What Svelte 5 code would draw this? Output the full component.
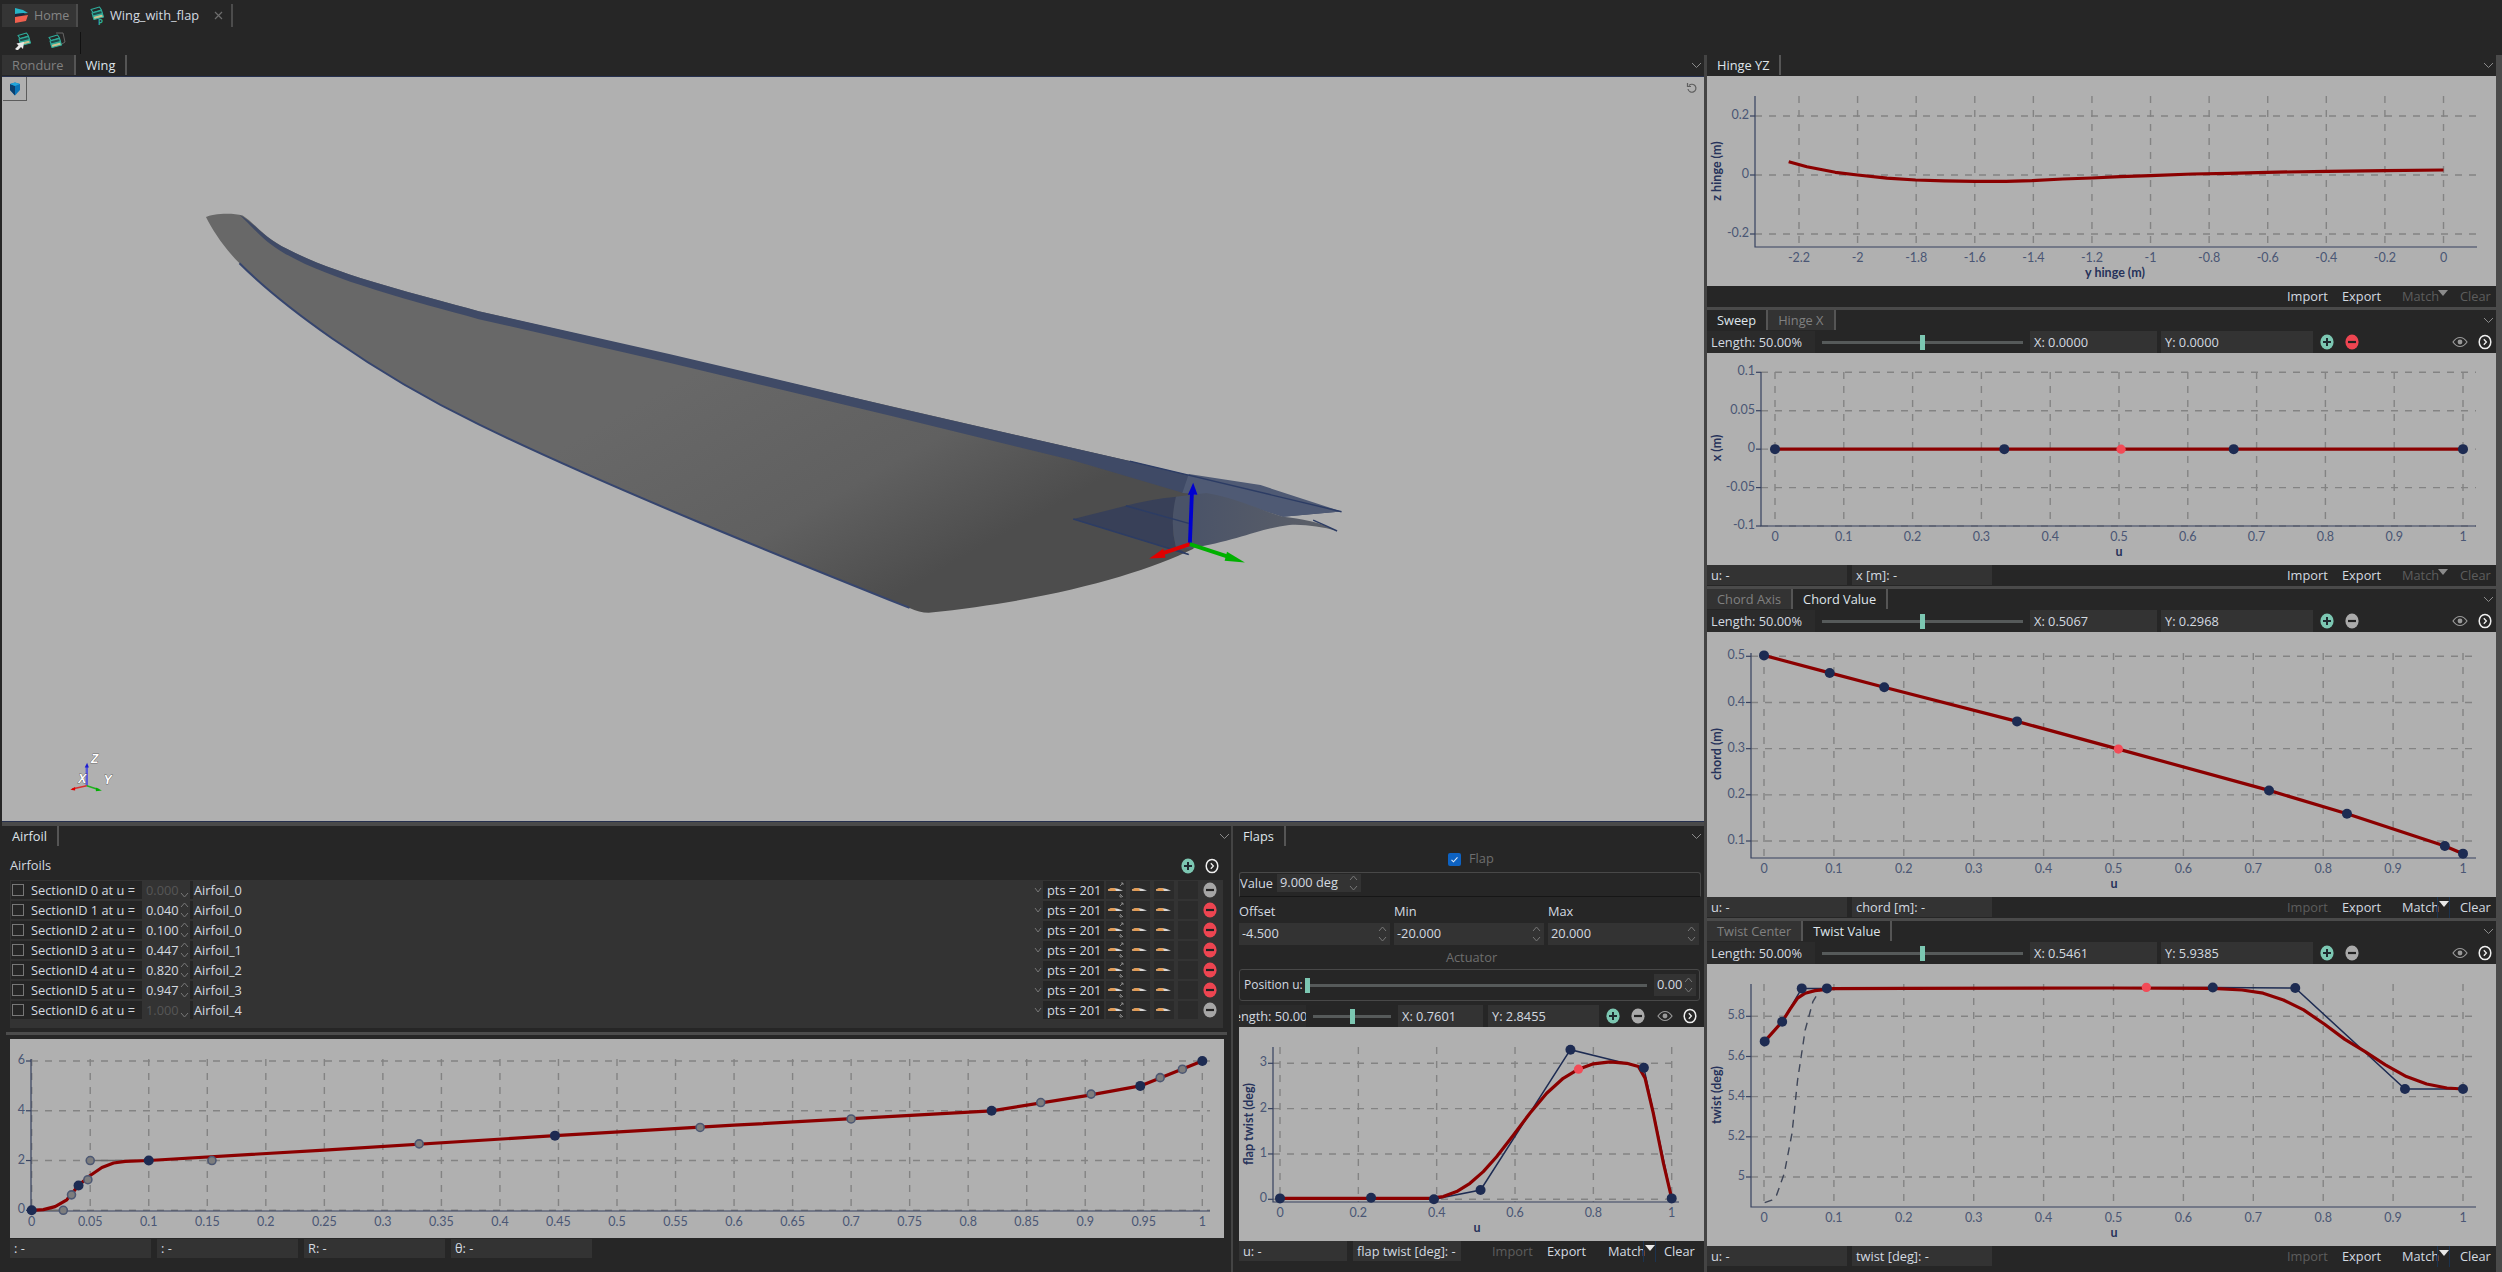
<script>
  // linear map from data value to pixel inside a plot
  const lin = (v0, p0, v1, p1) => (v) => p0 + ((v - v0) * (p1 - p0)) / (v1 - v0);
  const range = (a, b, step) => {
    const out = [];
    const n = Math.round((b - a) / step);
    for (let i = 0; i <= n; i++) out.push(+(a + i * step).toFixed(3));
    return out;
  };
  const line = (p, pts) => pts.map(([u, v]) => `${p.sx(u).toFixed(1)},${p.sy(v).toFixed(1)}`).join(' ');

  const hingePlot = {
    w: 789, h: 210, l: 48, t: 20, b: 171, r: 770,
    sx: lin(-2.2, 92, 0, 736.5), sy: lin(0.2, 40, -0.2, 158),
    xt: range(-2.2, 0, 0.2), yt: [0.2, 0, -0.2], tickY: 183, labelY: 198,
    xlabel: 'y hinge (m)', xlabelX: 408, ylabel: 'z hinge (m)', ylabelY: 95,
    curve: [[-2.235,.045],[-2.173,.028],[-2.076,.009],[-2,0],[-1.9,-.011],[-1.802,-.017],[-1.705,-.02],[-1.6,-.0215],[-1.493,-.0215],[-1.405,-.019],[-1.3,-.0136],[-1.2,-.01],[-1.104,-.0057],[-1,-.002],[-.857,.0034],[-.733,.0057],[-.6,.009],[-.397,.0125],[-.2,.0147],[0,.017]]
  };

  const sweepPlot = {
    w: 789, h: 212, l: 54, t: 19, b: 173, r: 769,
    sx: lin(0, 68, 1, 756), sy: lin(0.1, 19.3, -0.1, 173),
    xt: range(0, 1, 0.1), yt: [0.1, 0.05, 0, -0.05, -0.1], tickY: 185, labelY: 200,
    xlabel: 'u', xlabelX: 412, ylabel: 'x (m)', ylabelY: 95,
    curve: [[0,0],[1,0]], ctrl: [[0,0],[1,0]],
    dots: [[0,0],[.3333,0],[.6667,0],[1,0]], pick: [.503,0]
  };

  const chordPlot = {
    w: 789, h: 265, l: 44, t: 21, b: 226, r: 769,
    sx: lin(0, 57, 1, 756), sy: lin(0.5, 24.3, 0.1, 209),
    xt: range(0, 1, 0.1), yt: [0.5, 0.4, 0.3, 0.2, 0.1], tickY: 238, labelY: 253,
    xlabel: 'u', xlabelX: 407, ylabel: 'chord (m)', ylabelY: 122,
    curve: [[0,.502],[.094,.464],[.172,.433],[.362,.359],[.507,.299],[.7225,.2095],[.834,.159],[.974,.089],[1,.0726]],
    dots: [[0,.502],[.094,.464],[.172,.433],[.362,.359],[.7225,.2095],[.834,.159],[.974,.089],[1,.0726]],
    pick: [.507,.299]
  };

  const twistPlot = {
    w: 789, h: 282, l: 44, t: 20, b: 243, r: 769,
    sx: lin(0, 57, 1, 756), sy: lin(5.8, 52.3, 5, 213),
    xt: range(0, 1, 0.1), yt: [5.8, 5.6, 5.4, 5.2, 5], tickY: 255, labelY: 270,
    xlabel: 'u', xlabelX: 407, ylabel: 'twist (deg)', ylabelY: 131,
    curve: [[.001,5.675],[.026,5.773],[.037,5.835],[.048,5.89],[.059,5.915],[.073,5.928],[.099,5.938],[.201,5.939],[.494,5.941],[.642,5.939],[.684,5.931],[.714,5.915],[.743,5.881],[.772,5.832],[.802,5.76],[.831,5.685],[.86,5.624],[.889,5.558],[.919,5.5],[.948,5.463],[.977,5.443],[1,5.438]],
    ctrl: [[.001,5.675],[.026,5.773],[.054,5.939],[.09,5.939],[.642,5.943],[.76,5.941],[.917,5.438],[1,5.438]],
    dashed: [[.001,4.872],[.011,4.885],[.018,4.91],[.029,5.018],[.04,5.217],[.048,5.483],[.059,5.732],[.07,5.873],[.08,5.931],[.09,5.939]],
    dots: [[.001,5.675],[.026,5.773],[.054,5.939],[.09,5.939],[.642,5.943],[.76,5.941],[.917,5.438],[1,5.438]],
    pick: [.547,5.944]
  };

  const flapPlot = {
    w: 460, h: 214, l: 34, t: 20, b: 175, r: 440,
    sx: lin(0, 41, 1, 432.7), sy: lin(3, 36.3, 0, 172.3),
    xt: range(0, 1, 0.2), yt: [3, 2, 1, 0], tickY: 187, labelY: 202,
    xlabel: 'u', xlabelX: 238, ylabel: 'flap twist (deg)', ylabelY: 97,
    curve: [[0,.022],[.383,.022],[.417,.059],[.451,.169],[.485,.353],[.519,.61],[.553,.94],[.596,1.42],[.638,1.9],[.681,2.34],[.723,2.67],[.762,2.87],[.8,2.99],[.843,3.03],[.885,3],[.915,2.93],[.932,2.67],[.953,1.9],[.979,.79],[1,.022]],
    ctrl: [[0,.02],[.2325,.035],[.393,0],[.512,.205],[.7415,3.3],[.929,2.9],[1,.02]],
    dots: [[0,.02],[.2325,.035],[.393,0],[.512,.205],[.7415,3.3],[.929,2.9],[1,.02]],
    pick: [.762,2.87]
  };

  const airfoilPlot = {
    w: 1214, h: 199, l: 21, t: 20, b: 172, r: 1200,
    sx: lin(0, 21.7, 1, 1192.3), sy: lin(6, 22, 0, 171.3),
    xt: range(0, 1, 0.05), yt: [6, 4, 2, 0], tickY: 184,
    curve: [[0,0],[.01,.03],[.02,.15],[.03,.42],[.04,1],[.05,1.4],[.06,1.72],[.07,1.9],[.08,1.97],[.1,2],[.25,2.42],[.447,3],[.6,3.42],[.82,4],[.9,4.6],[.947,5],[1,6]],
    handles: [[.027,0],[.034,.62],[.048,1.23],[.05,2],[.154,2],[.331,2.67],[.571,3.33],[.7,3.67],[.862,4.33],[.905,4.67],[.964,5.33],[.983,5.67]],
    handleLines: [[[0,0],[.027,0]],[[.05,2],[.1,2]]],
    dots: [[0,0],[.04,1],[.1,2],[.447,3],[.82,4],[.947,5],[1,6]]
  };

  const sections = [
    { id: 0, u: '0.000', name: 'Airfoil_0', fixed: true },
    { id: 1, u: '0.040', name: 'Airfoil_0' },
    { id: 2, u: '0.100', name: 'Airfoil_0' },
    { id: 3, u: '0.447', name: 'Airfoil_1' },
    { id: 4, u: '0.820', name: 'Airfoil_2' },
    { id: 5, u: '0.947', name: 'Airfoil_3' },
    { id: 6, u: '1.000', name: 'Airfoil_4', fixed: true }
  ];
</script>

{#snippet chevron()}
  <svg class="chev" width="11" height="7" viewBox="0 0 11 7"><path d="M1 1l4.5 4.5L10 1" fill="none" stroke="#8a8a8a"/></svg>
{/snippet}

{#snippet spin(up = true)}
  <svg class="spin" width="9" height="18" viewBox="0 0 9 18">
    {#if up}<path d="M1 6l3.5-4L8 6" fill="none" stroke="#777"/>{/if}
    <path d="M1 12l3.5 4L8 12" fill="none" stroke="#777"/>
  </svg>
{/snippet}

{#snippet round(kind, color)}
  <svg class="round" width="14" height="16" viewBox="0 0 14 16">
    <ellipse cx="7" cy="8" rx="6.6" ry="7.4" fill={color}/>
    {#if kind === 'plus'}
      <path d="M3 8h8M7 4v8" stroke="#1f2a30" stroke-width="2"/>
    {:else}
      <path d="M3 8h8" stroke="#222" stroke-width="2.2"/>
    {/if}
  </svg>
{/snippet}

{#snippet next()}
  <svg class="round" width="14" height="16" viewBox="0 0 14 16">
    <ellipse cx="7" cy="8" rx="5.8" ry="6.6" fill="none" stroke="#eee" stroke-width="1.5"/>
    <path d="M5.8 5.2L8.4 8l-2.6 2.8" fill="none" stroke="#eee" stroke-width="1.3"/>
  </svg>
{/snippet}

{#snippet eye()}
  <svg class="eye" width="16" height="12" viewBox="0 0 16 12">
    <path d="M1 6c2-3 4.400-4.500 7-4.500S13 3 15 6c-2 3-4.400 4.500-7 4.500S3 9 1 6z" fill="none" stroke="#999" stroke-width="1.2"/>
    <circle cx="8" cy="6" r="2.400" fill="#999"/>
  </svg>
{/snippet}

{#snippet tabs(list, active)}
  <div class="tabs">
    {#each list as t}
      <div class="tab" class:on={t === active}>{t}</div>
    {/each}
    <div class="grow"></div>
    {@render chevron()}
  </div>
{/snippet}

{#snippet tools(x, y, minusColor, narrow = false)}
  <div class="tools" class:narrow>
    <div class="field len">Length: 50.00%</div>
    <div class="slider"><i></i></div>
    <div class="field fx">X: {x}</div>
    <div class="field fy">Y: {y}</div>
    <span class="plus">{@render round('plus', '#7cc7b2')}</span>
    <span class="minus">{@render round('minus', minusColor)}</span>
    <div class="grow"></div>
    {@render eye()}
    <span class="nx">{@render next()}</span>
  </div>
{/snippet}

{#snippet bar(fields, imp, match, narrow = false)}
  <div class="bar" class:narrow>
    {#each fields as f}
      <div class="field read">{f}</div>
    {/each}
    <div class="grow"></div>
    <div class="act a-imp" class:off={!imp}>Import</div>
    <div class="act a-exp">Export</div>
    <div class="act a-match" class:off={!match}>Match<b class:live={match}></b></div>
    <div class="act a-clear" class:off={!match}>Clear</div>
  </div>
{/snippet}

{#snippet plot(p)}
  <svg class="plot" width={p.w} height={p.h} viewBox="0 0 {p.w} {p.h}">
    <g class="grid">
      {#each p.xt as v}<line x1={p.sx(v)} x2={p.sx(v)} y1={p.t} y2={p.b}/>{/each}
      {#each p.yt as v}<line x1={p.l} x2={p.r} y1={p.sy(v)} y2={p.sy(v)}/>{/each}
    </g>
    <path class="axis" d="M{p.l} {p.t}V{p.b}H{p.r}"/>
    {#each p.xt as v}
      <text class="tick" x={p.sx(v)} y={p.tickY} text-anchor="middle" dominant-baseline="middle">{v}</text>
    {/each}
    {#each p.yt as v}
      <path class="axis" d="M{p.l - 5} {p.sy(v)}h5"/>
      <text class="tick" x={p.l - 6} y={p.sy(v)} text-anchor="end" dominant-baseline="middle">{v}</text>
    {/each}
    {#if p.xlabel}
      <text class="label" x={p.xlabelX} y={p.labelY} text-anchor="middle" dominant-baseline="middle">{p.xlabel}</text>
      <text class="label" transform="translate(11 {p.ylabelY}) rotate(-90)" text-anchor="middle" dominant-baseline="middle">{p.ylabel}</text>
    {/if}
    {#if p.dashed}<polyline class="dashed" points={line(p, p.dashed)}/>{/if}
    {#if p.ctrl}<polyline class="ctrl" points={line(p, p.ctrl)}/>{/if}
    {#if p.handleLines}
      {#each p.handleLines as h}<polyline class="hline" points={line(p, h)}/>{/each}
    {/if}
    <polyline class="curve" points={line(p, p.curve)}/>
    {#if p.handles}
      {#each p.handles as [u, v]}<circle class="handle" cx={p.sx(u)} cy={p.sy(v)} r="4"/>{/each}
    {/if}
    {#if p.dots}
      {#each p.dots as [u, v]}<circle class="dot" cx={p.sx(u)} cy={p.sy(v)} r="5"/>{/each}
    {/if}
    {#if p.pick}<circle class="pick" cx={p.sx(p.pick[0])} cy={p.sy(p.pick[1])} r="4.600"/>{/if}
  </svg>
{/snippet}

{#snippet foilIcon(arrows = false)}
  <div class="cell-ic">
    <svg width="20" height="18" viewBox="0 0 20 18">
      <path d="M2 8.500Q7 5 17 9.500Q9 10.500 2 9.500z" fill="#d9d9d9"/>
      <path d="M2 8.500Q5 6.800 9 7.200L10 10Q5 10 2 9.500z" fill="#e29a52"/>
      {#if arrows}
        <path d="M14 5l3-3M17 2h-2M17 2v2M14 13l3 3M14 16h2M14 16v-2" stroke="#999" fill="none" stroke-width=".8"/>
      {/if}
    </svg>
  </div>
{/snippet}

{#snippet stripes()}
  <g stroke-width="1.100" stroke-linejoin="round">
    <path d="M4 3.500L12.500 1 14.500 4 6 6.500z" fill="none" stroke="#2fae9c"/>
    <path d="M5 7L14.500 4.500 15.500 7.500 6 10z" fill="#1f4a48" stroke="#2fae9c"/>
    <path d="M6 10.500L15.500 8 16.500 11 7 13.500z" fill="#cfc08f" stroke="#2fae9c"/>
  </g>
{/snippet}

<div class="app">
  <header class="doc-tabs">
    <div class="doc home">
      <svg width="15" height="17" viewBox="0 0 15 17">
        <path d="M1 1l8 2 5 3-13 1z" fill="#27b4c6"/>
        <path d="M1 7l9-1 1 2-10 2z" fill="#18273f"/>
        <path d="M1 10l13-2-2 6-11 2z" fill="#f0604f"/>
      </svg>
      <span>Home</span>
    </div>
    <div class="doc wing">
      <svg width="18" height="19" viewBox="0 0 18 19">
        {@render stripes()}
        <text class="p" x="11" y="18.500">P</text>
      </svg>
      <span>Wing_with_flap</span>
      <svg class="close" width="9" height="9" viewBox="0 0 9 9"><path d="M1 1l7 7M8 1L1 8" stroke="#6d6d6d" stroke-width="1.200"/></svg>
    </div>
  </header>

  <div class="toolbar">
    <svg width="18" height="18" viewBox="0 0 18 18">
      {@render stripes()}
      <path d="M1 17l3.500-3.500-2-2L10 10l-1 7-2-2-3.500 3.500z" fill="#e8e8e8"/>
    </svg>
    <svg width="19" height="18" viewBox="0 0 19 18">
      <path d="M9 1l7 0 2 9-3 2" fill="none" stroke="#666"/>
      <g transform="translate(-2 2)">{@render stripes()}</g>
    </svg>
    <div class="tb-sep"></div>
  </div>

  <div class="main">
    <div class="left">
      {@render tabs(['Rondure', 'Wing'], 'Wing')}
      <div class="viewport">
        <button class="view-btn" aria-label="View">
          <svg width="12" height="14" viewBox="0 0 12 14">
            <path d="M1 2l5-1.500L11 2v6l-5 5.500L1 8z" fill="#0a74b8"/>
            <path d="M1 2l5 2v9.500L1 8z" fill="#0b3f6e"/>
            <path d="M6 .5L11 2 6 4 1 2z" fill="#20a6dc"/>
          </svg>
        </button>
        <svg class="undo" width="12" height="12" viewBox="0 0 12 12">
          <path d="M3 3.500A4 4 0 1 1 2 7" fill="none" stroke="#5e5e5e" stroke-width="1.200"/>
          <path d="M1.500 1v3.500H5" fill="none" stroke="#5e5e5e" stroke-width="1.200"/>
        </svg>
        <svg class="scene" width="1701" height="746" viewBox="1.25 47.6 1066 467.6">
          <defs>
            <linearGradient id="skin" gradientUnits="userSpaceOnUse" x1="450" y1="225" x2="540" y2="385">
              <stop offset="0" stop-color="#686868"/>
              <stop offset="0.6" stop-color="#606060"/>
              <stop offset="1" stop-color="#4d4d4d"/>
            </linearGradient>
            <linearGradient id="flapskin" gradientUnits="userSpaceOnUse" x1="745" y1="320" x2="840" y2="330">
              <stop offset="0" stop-color="#4a5368"/>
              <stop offset="1" stop-color="#5e6168"/>
            </linearGradient>
          </defs>
          <path fill="url(#skin)" d="M129 136C132 134 145 133 152 135C160 140 165 149 180 156C210 172 260 184 300 195L708 289L745 300L748 344C715 360 660 376 582 384C578 384 574 383 570 381C500 353 380 305 300 266C230 232 175 190 150 165C140 155 133 144 129 136Z"/>
          <path fill="#3f4a66" d="M150 134.500C160 140 165 149 180 156C210 172 260 184 300 195L420 222L560 255L708 289L840.500 320.500L804 323.800L760 310L741.600 309L671.600 288.300L560 261L420 227.500L300 200C260 189 205 175 177 158C165 151 158 142 150 134.500Z"/>
          <polygon fill="#4f5a74" points="741,309 760,310 804,323.800 840.500,320.500 790,304 745,297"/>
          <path fill="#384058" d="M672.600 325.300L705.600 317Q720 313 737.400 311.300Q733 328 737 343L745.700 347.800Z"/>
          <path fill="url(#flapskin)" d="M737 311.300L756 309C775 312 790 320 804 323.800C815 325 828 327 838 332.800C828 330 818 328.500 808 329C790 331 775 339 745.700 343.700L737 343Q733 328 737 311.300Z"/>
          <path d="M672.600 325.300L745 347.500M705.600 317L745 328M840.800 320.700L708 289M838 332.800Q830 329 823 326" fill="none" stroke="#2c3c64" stroke-width=".9"/>
          <path d="M150 165C175 190 230 232 300 266C380 305 500 353 570 381" fill="none" stroke="#36456e" stroke-width="1.300"/>

          <path d="M745.700 341L747 309" stroke="#0000d0" stroke-width="2.400"/>
          <polygon fill="#0000d0" points="744.500,310 750.500,310 747.800,302.500"/>
          <path d="M745.700 341L728 347" stroke="#e00000" stroke-width="2.400"/>
          <polygon fill="#e00000" points="729,344 730.500,349.500 720.300,350"/>
          <path d="M745.700 341L770 349" stroke="#00b000" stroke-width="2.400"/>
          <polygon fill="#00b000" points="769,345.800 767.500,351.500 780.200,352.600"/>

          <g class="triad">
            <path d="M54.300 492.500V480" stroke="#5a5ad8" stroke-width="1.500"/>
            <polygon fill="#1c1cd0" points="53,481 55.600,481 54.500,478"/>
            <path d="M54.300 492.500L45 494.500" stroke="#d83030" stroke-width="1"/>
            <polygon fill="#e00000" points="47,493.300 47,495.500 44,495"/>
            <path d="M54.300 492.500L62 495" stroke="#20b020" stroke-width="1"/>
            <polygon fill="#00b000" points="60,493.500 60,496 63.800,495.500"/>
            <text x="57" y="478.500">Z</text>
            <text x="49" y="491">X</text>
            <text x="65" y="491.500">Y</text>
          </g>
        </svg>
      </div>
      <div class="hsep"></div>
      <div class="lower">
        <section class="airfoil">
          {@render tabs(['Airfoil'], 'Airfoil')}
          <div class="af-head">
            <span>Airfoils</span>
            <div class="grow"></div>
            {@render round('plus', '#7cc7b2')}
            <span class="nx">{@render next()}</span>
          </div>
          <div class="af-table">
            {#each sections as s}
              <div class="af-row">
                <div class="cell c-sec">
                  <i class="box"></i>
                  <span>SectionID {s.id} at u =</span>
                </div>
                <div class="c-val" class:dis={s.fixed}>{s.u}{@render spin(!s.fixed)}</div>
                <i class="notch"></i>
                <div class="c-name">{s.name}</div>
                <div class="grow"></div>
                <svg class="mini" width="8" height="6" viewBox="0 0 8 6"><path d="M1 1l3 4 3-4" fill="none" stroke="#777"/></svg>
                <div class="cell c-pts">pts = 201</div>
                {@render foilIcon(true)}
                {@render foilIcon()}
                {@render foilIcon()}
                <div class="cell-ic"></div>
                <span class="row-minus">{@render round('minus', s.fixed ? '#a6a6a6' : '#ee4551')}</span>
              </div>
            {/each}
          </div>
          <div class="af-sep"></div>
          <div class="af-plot">{@render plot(airfoilPlot)}</div>
          <div class="af-fields">
            <div class="field read">: -</div>
            <div class="field read">: -</div>
            <div class="field read">R: -</div>
            <div class="field read">θ: -</div>
          </div>
        </section>

        <section class="flaps">
          {@render tabs(['Flaps'], 'Flaps')}
          <div class="fl-check">
            <i class="ticked"><svg width="13" height="13" viewBox="0 0 13 13"><path d="M3.500 6.800l2 2 4-4.500" fill="none" stroke="#dfe9f5" stroke-width="1.100"/></svg></i>
            <span>Flap</span>
          </div>
          <div class="fl-value">
            <span>Value</span>
            <div class="spinbox">9.000 deg{@render spin()}</div>
          </div>
          <div class="fl-range">
            <div><label for="off">Offset</label><div class="input" id="off">-4.500{@render spin()}</div></div>
            <div><label for="min">Min</label><div class="input" id="min">-20.000{@render spin()}</div></div>
            <div><label for="max">Max</label><div class="input" id="max">20.000{@render spin()}</div></div>
          </div>
          <div class="fl-title">Actuator</div>
          <div class="fl-act">
            <span>Position u:</span>
            <div class="slider full"><i></i></div>
            <div class="input small">0.00{@render spin()}</div>
          </div>
          {@render tools('0.7601', '2.8455', '#aaaaaa', true)}
          <div class="plot-wrap">{@render plot(flapPlot)}</div>
          {@render bar(['u: -', 'flap twist [deg]: -'], false, true, true)}
        </section>
      </div>
    </div>

    <aside class="right">
      <section class="panel">
        {@render tabs(['Hinge YZ'], 'Hinge YZ')}
        <div class="plot-wrap">{@render plot(hingePlot)}</div>
        {@render bar([], true, false)}
      </section>
      <section class="panel">
        {@render tabs(['Sweep', 'Hinge X'], 'Sweep')}
        {@render tools('0.0000', '0.0000', '#ee4551')}
        <div class="plot-wrap">{@render plot(sweepPlot)}</div>
        {@render bar(['u: -', 'x [m]: -'], true, false)}
      </section>
      <section class="panel">
        {@render tabs(['Chord Axis', 'Chord Value'], 'Chord Value')}
        {@render tools('0.5067', '0.2968', '#aaaaaa')}
        <div class="plot-wrap">{@render plot(chordPlot)}</div>
        {@render bar(['u: -', 'chord [m]: -'], false, true)}
      </section>
      <section class="panel">
        {@render tabs(['Twist Center', 'Twist Value'], 'Twist Value')}
        {@render tools('0.5461', '5.9385', '#aaaaaa')}
        <div class="plot-wrap">{@render plot(twistPlot)}</div>
        {@render bar(['u: -', 'twist [deg]: -'], false, true)}
      </section>
    </aside>
  </div>
</div>

<style>
  :global(body) {
    margin: 0;
    background: #262626;
  }

  .app {
    width: 2502px;
    height: 1272px;
    overflow: hidden;
    background: #262626;
    color: #d4dae0;
    font: 12.8px/1.2 "Open Sans", "Noto Sans", sans-serif;
    display: flex;
    flex-direction: column;
  }

  .grow { flex: 1; }

  /* document tabs */
  .doc-tabs {
    height: 27px;
    padding: 4px 0 0 2px;
    box-sizing: border-box;
    display: flex;
  }
  .doc {
    display: flex;
    align-items: center;
    border-right: 2px solid #4c4c4c;
  }
  .home {
    width: 76px;
    box-sizing: border-box;
    padding-left: 12px;
    gap: 5px;
    background: #353535;
    color: #858585;
    font-size: 12.5px;
  }
  .wing {
    width: 155px;
    box-sizing: border-box;
    padding-left: 9px;
    gap: 5px;
  }
  .close { margin-left: 10px; }
  .p { font: bold 8px "Open Sans", sans-serif; fill: #2fae9c; }

  .toolbar {
    height: 28px;
    box-sizing: border-box;
    padding: 5px 0 0 14px;
    display: flex;
    align-items: flex-start;
    gap: 15px;
  }
  .tb-sep {
    width: 1px;
    height: 22px;
    margin-left: -1px;
    background: #111;
  }

  .main {
    flex: 1;
    display: flex;
    min-height: 0;
  }

  /* left column */
  .left {
    width: 1702px;
    padding-left: 2px;
    display: flex;
    flex-direction: column;
    border-right: 3px solid #444;
    flex: none;
    background: #262626;
  }

  .tabs {
    height: 20px;
    margin-bottom: 1px;
    display: flex;
    align-items: stretch;
    flex: none;
  }
  .tab {
    padding: 1px 10px 0;
    display: flex;
    align-items: center;
    background: #333;
    color: #808080;
    border-right: 2px solid #555;
  }
  .tab.on {
    background: #262626;
    color: #dfe5ea;
  }
  .chev {
    align-self: center;
    margin-right: 2px;
  }

  .viewport {
    height: 746px;
    position: relative;
    background: #b0b0b0;
    box-sizing: border-box;
    border-top: 1px solid #26304e;
    border-bottom: 1px solid #26304e;
    flex: none;
    overflow: hidden;
  }
  .scene {
    display: block;
    margin-top: -1px;
  }
  .view-btn {
    position: absolute;
    left: 1px;
    top: 0;
    width: 24px;
    height: 24px;
    padding: 0;
    background: #b0b0b0;
    border: 0;
    border-right: 1px solid #5c5c5c;
    border-bottom: 1px solid #5c5c5c;
    display: flex;
    align-items: center;
    justify-content: center;
  }
  .undo {
    position: absolute;
    right: 6px;
    top: 5px;
  }
  .triad text {
    font: italic bold 7.500px "Liberation Sans", sans-serif;
    fill: #fff;
    stroke: #222;
    stroke-width: .3;
    paint-order: stroke;
  }

  .hsep {
    height: 4px;
    background: #4a4a4a;
    flex: none;
  }

  .lower {
    flex: 1;
    min-height: 0;
    display: flex;
  }

  /* airfoil panel */
  .airfoil {
    width: 1229px;
    flex: none;
    display: flex;
    flex-direction: column;
    border-right: 2px solid #444;
  }
  .airfoil .tabs { margin-bottom: 0; }
  .airfoil .chev { margin-right: 1px; }
  .af-head {
    height: 34px;
    margin: 0 12px 0 8px;
    padding-top: 5px;
    box-sizing: border-box;
    display: flex;
    align-items: center;
    flex: none;
    gap: 10px;
  }
  .af-table {
    height: 148px;
    margin: 0 8px 0 8px;
    padding: 1px 0 0 1px;
    box-sizing: border-box;
    background: #333;
    display: flex;
    flex-direction: column;
    gap: 2px;
    flex: none;
  }
  .af-row {
    height: 18px;
    display: flex;
    align-items: stretch;
  }
  .cell {
    background: #252525;
    display: flex;
    align-items: center;
    padding-top: 1px;
    box-sizing: border-box;
  }
  .c-sec {
    width: 131px;
    padding-left: 1px;
    gap: 7px;
    white-space: nowrap;
  }
  .box {
    width: 10px;
    height: 10px;
    flex: none;
    border: 1px solid #777;
    margin-top: -2px;
  }
  .c-val {
    width: 44px;
    padding: 1px 0 0 4px;
    display: flex;
    align-items: center;
    gap: 1px;
  }
  .c-val .spin { margin-top: -1px; }
  .c-val.dis { color: #565656; }
  .notch {
    width: 3px;
    background: #252525;
  }
  .c-name {
    margin-left: 1px;
    padding-top: 1px;
    display: flex;
    align-items: center;
  }
  .mini {
    align-self: center;
    margin-right: 1px;
  }
  .c-pts {
    width: 61px;
    padding-left: 4px;
    margin-right: 2px;
    white-space: nowrap;
  }
  .cell-ic {
    width: 20px;
    height: 18px;
    background: #2b2b2b;
    margin-right: 4px;
  }
  .cell-ic svg { display: block; }
  .row-minus {
    width: 15px;
    margin: 0 5px 0 1px;
    align-self: center;
    display: flex;
  }
  .af-sep {
    height: 3px;
    margin: 4px;
    background: #4c4c4c;
    flex: none;
  }
  .af-plot {
    height: 199px;
    margin-left: 8px;
    background: #b0b0b0;
    flex: none;
    width: 1214px;
  }
  .af-fields {
    margin: 1px 0 0 8px;
    display: flex;
    gap: 6px;
  }
  .af-fields .field {
    width: 141px;
    height: 19px;
  }

  /* flaps panel */
  .flaps {
    flex: 1;
    min-width: 0;
    padding-left: 6px;
    display: flex;
    flex-direction: column;
  }
  .flaps > .tabs {
    margin: 0 0 0 -6px;
  }
  .fl-check {
    height: 26px;
    padding-left: 209px;
    display: flex;
    align-items: center;
    gap: 8px;
    color: #6e6e6e;
    flex: none;
  }
  .ticked {
    width: 13px;
    height: 13px;
    border-radius: 2px;
    background: #0d62c2;
    display: flex;
  }
  .fl-value {
    height: 25px;
    margin-right: 3px;
    padding-top: 1px;
    box-sizing: border-box;
    border: 1px solid #484848;
    border-bottom-color: #161616;
    border-radius: 3px 3px 0 0;
    display: flex;
    align-items: flex-start;
    gap: 4px;
    flex: none;
  }
  .fl-value span { line-height: 19px; }
  .spinbox {
    width: 84px;
    height: 18px;
    padding: 0 3px;
    box-sizing: border-box;
    background: #333;
    display: flex;
    align-items: center;
    justify-content: space-between;
  }
  .fl-range {
    height: 48px;
    margin-right: 3px;
    display: grid;
    grid-template-columns: 151px 150px 151px;
    column-gap: 4px;
    flex: none;
  }
  .fl-range label {
    display: block;
    height: 26px;
    line-height: 28px;
  }
  .input {
    height: 22px;
    padding: 0 3px;
    box-sizing: border-box;
    background: #333;
    display: flex;
    align-items: center;
    justify-content: space-between;
  }
  .fl-title {
    height: 24px;
    line-height: 24px;
    text-align: center;
    color: #6e6e6e;
    flex: none;
  }
  .fl-act {
    height: 32px;
    margin-right: 4px;
    padding: 0 3px 0 4px;
    box-sizing: border-box;
    border: 1px solid #484848;
    border-radius: 3px;
    display: flex;
    align-items: center;
    gap: 2px;
    flex: none;
  }
  .fl-act span {
    flex: none;
    white-space: nowrap;
    font-size: 12px;
  }
  .input.small {
    width: 42px;
    margin-left: 5px;
  }
  .slider.full {
    flex: 1;
    margin: 0;
    width: auto;
  }
  .slider.full i { left: 0; }

  /* right column */
  .right {
    flex: 1;
    min-width: 0;
    padding-right: 6px;
    display: grid;
    grid-template-rows: 252px 276px 329px 1fr;
    row-gap: 3px;
    background: #4a4a4a;
  }
  .panel {
    display: flex;
    flex-direction: column;
    background: #262626;
    min-height: 0;
  }
  .plot-wrap {
    flex: none;
    background: #b0b0b0;
  }
  .plot { display: block; }

  /* slider row over a plot */
  .tools {
    height: 22px;
    display: flex;
    align-items: stretch;
    flex: none;
  }
  .field {
    background: #333;
    padding: 1px 4px 0;
    box-sizing: border-box;
    display: flex;
    align-items: center;
    white-space: nowrap;
    overflow: hidden;
  }
  .len {
    width: 108px;
    background: #2b2b2b;
    padding: 1px 0 0 4px;
    flex: none;
  }
  .slider {
    position: relative;
    width: 201px;
    margin: 0 7px;
    flex: none;
    align-self: center;
    height: 3px;
    background: #565a5a;
  }
  .slider i {
    position: absolute;
    left: 98px;
    top: -6px;
    width: 5px;
    height: 15px;
    background: #7cc7b2;
  }
  .fx { width: 127px; flex: none; }
  .fy { width: 152px; margin-left: 4px; flex: none; }
  .plus { margin-left: 7px; align-self: center; display: flex; }
  .minus { margin-left: 11px; align-self: center; display: flex; }
  .eye { align-self: center; }
  .nx { margin: 0 4px 0 10px; align-self: center; display: flex; }
  .af-head .nx { margin: 0; }

  .tools.narrow .len {
    width: 67px;
    padding: 1px 0 0;
    justify-content: center;
  }
  .tools.narrow .slider { width: 78px; }
  .tools.narrow .slider i { left: 37px; }
  .tools.narrow .fx { width: 85px; }
  .tools.narrow .fy { width: 111px; margin-left: 5px; }
  .flaps .tools { margin-right: 3px; margin-top: 4px; }

  /* import / export bar */
  .bar {
    height: 21px;
    display: flex;
    align-items: stretch;
    flex: none;
  }
  .bar .read {
    width: 140px;
    height: 20px;
    margin-right: 5px;
  }
  .bar.narrow .read {
    width: 108px;
    margin-right: 6px;
  }
  .act {
    display: flex;
    align-items: center;
    padding-top: 1px;
    box-sizing: border-box;
    position: relative;
  }
  .act.off { color: #5d5d5d; }
  .a-imp { width: 55px; }
  .a-exp { width: 60px; }
  .a-match { width: 58px; }
  .a-clear { width: 36px; }
  .a-match b {
    position: absolute;
    left: 35px;
    top: 0;
    width: 13px;
    height: 100%;
    box-sizing: border-box;
  }
  .a-match b.live {
    border: 1px solid #1b3350;
    border-width: 0 1px;
  }
  .a-match b::after {
    content: "";
    position: absolute;
    left: 1px;
    top: 4px;
    border: 5px solid transparent;
    border-top: 6px solid #e8e8e8;
    border-bottom: 0;
  }
  .act.off b::after { border-top-color: #8a8a8a; }
  .bar.narrow { margin-right: 3px; }
  .bar.narrow .a-imp { width: 55px; }
  .bar.narrow .a-exp { width: 61px; }
  .bar.narrow .a-match { width: 56px; }
  .bar.narrow .a-clear { width: 37px; }

  /* plot contents */
  .grid line {
    stroke: #838383;
    stroke-width: 1.400;
    stroke-dasharray: 7 7;
  }
  .axis {
    fill: none;
    stroke: #36415f;
    stroke-width: 1.200;
  }
  .tick {
    font: 12.500px "Lato", "Open Sans", sans-serif;
    fill: #4a5674;
  }
  .label {
    font: bold 12.500px "Lato", "Open Sans", sans-serif;
    fill: #26325a;
  }
  .curve {
    fill: none;
    stroke: #8b0000;
    stroke-width: 3.200;
    stroke-linejoin: round;
  }
  .ctrl {
    fill: none;
    stroke: #1d2b52;
    stroke-width: 1.500;
  }
  .hline {
    fill: none;
    stroke: #6a6a6a;
    stroke-width: 1.500;
  }
  .dashed {
    fill: none;
    stroke: #3f4658;
    stroke-width: 1.400;
    stroke-dasharray: 8 6;
  }
  .dot { fill: #1d2b52; }
  .pick { fill: #f24b57; }
  .handle {
    fill: #7d7d7d;
    stroke: #4d5873;
    stroke-width: 1.600;
  }
</style>
